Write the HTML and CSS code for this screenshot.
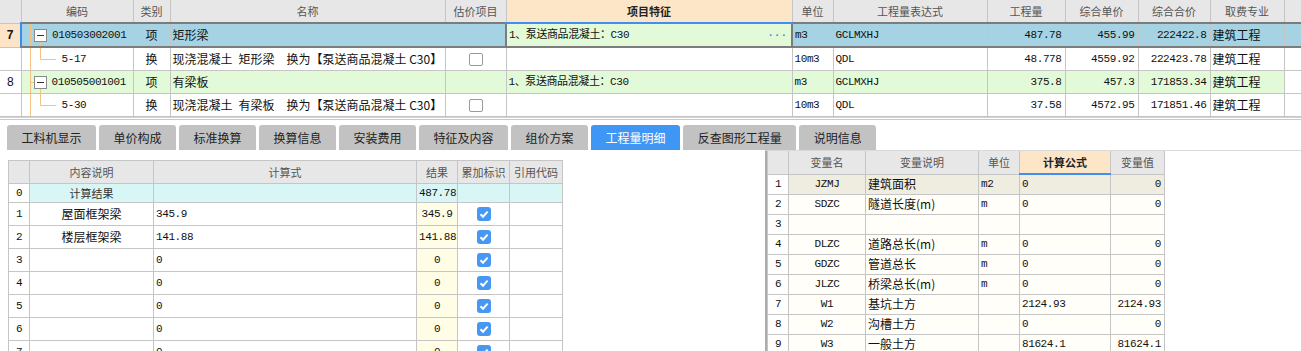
FILE: index.html
```html
<!DOCTYPE html>
<html lang="zh-CN">
<head>
  <meta charset="UTF-8" />
  <title>工程量明细</title>
  <link rel="stylesheet" href="styles.css">
</head>
<body>
  <table class="grid main">
    <colgroup>
      <col class="w21"><col class="w112"><col class="w37"><col class="w275"><col class="w61"><col class="w286">
      <col class="w41"><col class="w154"><col class="w78"><col class="w73"><col class="w72"><col class="w74"><col class="w17">
    </colgroup>
    <thead>
      <tr>
        <th></th><th>编码</th><th>类别</th><th>名称</th><th>估价项目</th><th class="sorted">项目特征</th>
        <th>单位</th><th>工程量表达式</th><th>工程量</th><th>综合单价</th><th>综合合价</th><th>取费专业</th><th></th>
      </tr>
    </thead>
    <tbody>
      <tr class="sel">
        <td class="rn cur-rn">7</td>
        <td class="code first">
          <div class="tree">
            <svg width="30" height="22" viewBox="0 0 30 22"><path d="M8.5 0V22M8.5 11.5H12M18.5 17.5V22" stroke="#f5c37f" fill="none"/><rect x="12.5" y="5.5" width="12" height="12" fill="#fff" stroke="#8a8a8a"/><path d="M15 11.5H22" stroke="#333"/></svg>
            <span>010503002001</span>
          </div>
        </td>
        <td class="c txt">项</td>
        <td class="txt">矩形梁</td>
        <td></td>
        <td class="cur"><div class="feat"><span>1、泵送商品混凝土：C30</span><span class="more">···</span></div></td>
        <td>m3</td>
        <td>GCLMXHJ</td>
        <td class="r">487.78</td>
        <td class="r">455.99</td>
        <td class="r">222422.8</td>
        <td class="txt">建筑工程</td>
        <td></td>
      </tr>
      <tr>
        <td class="rn"></td>
        <td class="code">
          <div class="tree">
            <svg width="40" height="22" viewBox="0 0 40 22"><path d="M8.5 0V22M18.5 0V11.5H34" stroke="#f5c37f" fill="none"/></svg>
            <span>5-17</span>
          </div>
        </td>
        <td class="c txt">换</td>
        <td class="txt name">现浇混凝土&ensp;矩形梁&ensp;&ensp;换为【泵送商品混凝土 C30】</td>
        <td class="c"><span class="box"></span></td>
        <td></td>
        <td>10m3</td>
        <td>QDL</td>
        <td class="r">48.778</td>
        <td class="r">4559.92</td>
        <td class="r">222423.78</td>
        <td class="txt">建筑工程</td>
        <td></td>
      </tr>
      <tr class="green">
        <td class="rn">8</td>
        <td class="code">
          <div class="tree">
            <svg width="30" height="22" viewBox="0 0 30 22"><path d="M8.5 0V22M8.5 11.5H12M18.5 17.5V22" stroke="#f5c37f" fill="none"/><rect x="12.5" y="5.5" width="12" height="12" fill="#fff" stroke="#8a8a8a"/><path d="M15 11.5H22" stroke="#333"/></svg>
            <span>010505001001</span>
          </div>
        </td>
        <td class="c txt">项</td>
        <td class="txt">有梁板</td>
        <td></td>
        <td>1、泵送商品混凝土：C30</td>
        <td>m3</td>
        <td>GCLMXHJ</td>
        <td class="r">375.8</td>
        <td class="r">457.3</td>
        <td class="r">171853.34</td>
        <td class="txt">建筑工程</td>
        <td class="blank"></td>
      </tr>
      <tr>
        <td class="rn"></td>
        <td class="code">
          <div class="tree">
            <svg width="40" height="22" viewBox="0 0 40 22"><path d="M8.5 0V22M18.5 0V11.5H34" stroke="#f5c37f" fill="none"/></svg>
            <span>5-30</span>
          </div>
        </td>
        <td class="c txt">换</td>
        <td class="txt name">现浇混凝土&ensp;有梁板&ensp;&ensp;换为【泵送商品混凝土 C30】</td>
        <td class="c"><span class="box"></span></td>
        <td></td>
        <td>10m3</td>
        <td>QDL</td>
        <td class="r">37.58</td>
        <td class="r">4572.95</td>
        <td class="r">171851.46</td>
        <td class="txt">建筑工程</td>
        <td></td>
      </tr>
    </tbody>
  </table>

  <div class="split"></div>

  <div class="tabs">
    <div class="tab">工料机显示</div>
    <div class="tab">单价构成</div>
    <div class="tab">标准换算</div>
    <div class="tab">换算信息</div>
    <div class="tab">安装费用</div>
    <div class="tab">特征及内容</div>
    <div class="tab">组价方案</div>
    <div class="tab active">工程量明细</div>
    <div class="tab">反查图形工程量</div>
    <div class="tab">说明信息</div>
  </div>

  <div class="detail">
    <div class="calc-pane">
      <table class="grid calc">
        <colgroup>
          <col class="w21"><col class="w124"><col class="w263"><col class="w41"><col class="w52"><col class="w53">
        </colgroup>
        <thead>
          <tr><th></th><th>内容说明</th><th>计算式</th><th>结果</th><th>累加标识</th><th>引用代码</th></tr>
        </thead>
        <tbody>
          <tr class="total">
            <td class="rn">0</td>
            <td class="c label">计算结果</td>
            <td></td>
            <td class="c">487.78</td>
            <td></td>
            <td></td>
          </tr>
          <tr>
            <td class="rn">1</td><td class="c txt">屋面框架梁</td><td>345.9</td><td class="c res">345.9</td>
            <td class="c"><svg class="chk" width="14" height="14" viewBox="0 0 14 14"><rect width="14" height="14" rx="3" fill="#4798f2"/><path d="M3.5 7.3L6 9.7L10.6 4.6" stroke="#fff" stroke-width="2" fill="none"/></svg></td><td></td>
          </tr>
          <tr>
            <td class="rn">2</td><td class="c txt">楼层框架梁</td><td>141.88</td><td class="c res">141.88</td>
            <td class="c"><svg class="chk" width="14" height="14" viewBox="0 0 14 14"><rect width="14" height="14" rx="3" fill="#4798f2"/><path d="M3.5 7.3L6 9.7L10.6 4.6" stroke="#fff" stroke-width="2" fill="none"/></svg></td><td></td>
          </tr>
          <tr>
            <td class="rn">3</td><td></td><td>0</td><td class="c res">0</td>
            <td class="c"><svg class="chk" width="14" height="14" viewBox="0 0 14 14"><rect width="14" height="14" rx="3" fill="#4798f2"/><path d="M3.5 7.3L6 9.7L10.6 4.6" stroke="#fff" stroke-width="2" fill="none"/></svg></td><td></td>
          </tr>
          <tr>
            <td class="rn">4</td><td></td><td>0</td><td class="c res">0</td>
            <td class="c"><svg class="chk" width="14" height="14" viewBox="0 0 14 14"><rect width="14" height="14" rx="3" fill="#4798f2"/><path d="M3.5 7.3L6 9.7L10.6 4.6" stroke="#fff" stroke-width="2" fill="none"/></svg></td><td></td>
          </tr>
          <tr>
            <td class="rn">5</td><td></td><td>0</td><td class="c res">0</td>
            <td class="c"><svg class="chk" width="14" height="14" viewBox="0 0 14 14"><rect width="14" height="14" rx="3" fill="#4798f2"/><path d="M3.5 7.3L6 9.7L10.6 4.6" stroke="#fff" stroke-width="2" fill="none"/></svg></td><td></td>
          </tr>
          <tr>
            <td class="rn">6</td><td></td><td>0</td><td class="c res">0</td>
            <td class="c"><svg class="chk" width="14" height="14" viewBox="0 0 14 14"><rect width="14" height="14" rx="3" fill="#4798f2"/><path d="M3.5 7.3L6 9.7L10.6 4.6" stroke="#fff" stroke-width="2" fill="none"/></svg></td><td></td>
          </tr>
          <tr>
            <td class="rn">7</td><td></td><td>0</td><td class="c res">0</td>
            <td class="c"><svg class="chk" width="14" height="14" viewBox="0 0 14 14"><rect width="14" height="14" rx="3" fill="#4798f2"/><path d="M3.5 7.3L6 9.7L10.6 4.6" stroke="#fff" stroke-width="2" fill="none"/></svg></td><td></td>
          </tr>
        </tbody>
      </table>
    </div>

    <div class="var-pane">
      <table class="grid vars">
        <colgroup>
          <col class="w21"><col class="w77"><col class="w113"><col class="w41"><col class="w91"><col class="w54">
        </colgroup>
        <thead>
          <tr><th></th><th>变量名</th><th>变量说明</th><th>单位</th><th class="sorted">计算公式</th><th>变量值</th></tr>
        </thead>
        <tbody>
          <tr class="beige"><td class="rn">1</td><td class="c">JZMJ</td><td class="txt">建筑面积</td><td>m2</td><td>0</td><td class="r">0</td></tr>
          <tr><td class="rn">2</td><td class="c">SDZC</td><td class="txt">隧道长度(m)</td><td>m</td><td>0</td><td class="r">0</td></tr>
          <tr><td class="rn">3</td><td></td><td></td><td></td><td></td><td></td></tr>
          <tr><td class="rn">4</td><td class="c">DLZC</td><td class="txt">道路总长(m)</td><td>m</td><td>0</td><td class="r">0</td></tr>
          <tr><td class="rn">5</td><td class="c">GDZC</td><td class="txt">管道总长</td><td>m</td><td>0</td><td class="r">0</td></tr>
          <tr><td class="rn">6</td><td class="c">JLZC</td><td class="txt">桥梁总长(m)</td><td>m</td><td>0</td><td class="r">0</td></tr>
          <tr><td class="rn">7</td><td class="c">W1</td><td class="txt">基坑土方</td><td></td><td>2124.93</td><td class="r">2124.93</td></tr>
          <tr><td class="rn">8</td><td class="c">W2</td><td class="txt">沟槽土方</td><td></td><td>0</td><td class="r">0</td></tr>
          <tr><td class="rn">9</td><td class="c">W3</td><td class="txt">一般土方</td><td></td><td>81624.1</td><td class="r">81624.1</td></tr>
        </tbody>
      </table>
    </div>
  </div>
</body>
</html>
```

FILE: styles.css
```css
* {
  box-sizing: border-box;
}
html,
body {
  margin: 0;
}
body {
  width: 1301px;
  height: 351px;
  overflow: hidden;
  background: #fff;
  color: #111;
  font-family: "Liberation Mono", "Noto Sans CJK SC", monospace;
  font-size: 11px;
  letter-spacing: -0.4px;
}

/* grids */
.grid {
  border-collapse: collapse;
  table-layout: fixed;
}
.grid th,
.grid td {
  border: 1px solid #c5c5c5;
  padding: 0 2px;
  white-space: nowrap;
  overflow: hidden;
  line-height: 14px;
}
.grid th {
  background: #e7e7e7;
  color: #555;
  font-family: "Noto Sans CJK SC", sans-serif;
  font-size: 11px;
  font-weight: normal;
  letter-spacing: 0;
}
.grid th.sorted {
  background: #fde5c7;
  color: #222;
  font-weight: bold;
  border-bottom: 2px solid #3f8ef0;
}
.grid .txt {
  font-family: "Noto Sans CJK SC", sans-serif;
  font-size: 12px;
  letter-spacing: 0;
  color: #111;
}
.grid .c {
  text-align: center;
}
.grid .r {
  text-align: right;
  padding-right: 3px;
}
.grid .rn {
  text-align: center;
  padding: 0;
}

/* column widths */
.w17 { width: 17px; }
.w21 { width: 21px; }
.w37 { width: 37px; }
.w41 { width: 41px; }
.w52 { width: 52px; }
.w53 { width: 53px; }
.w54 { width: 54px; }
.w61 { width: 61px; }
.w72 { width: 72px; }
.w73 { width: 73px; }
.w74 { width: 74px; }
.w77 { width: 77px; }
.w78 { width: 78px; }
.w91 { width: 91px; }
.w112 { width: 112px; }
.w113 { width: 113px; }
.w124 { width: 124px; }
.w154 { width: 154px; }
.w263 { width: 263px; }
.w275 { width: 275px; }
.w286 { width: 286px; }

/* top bill grid */
.main {
  width: 1301px;
}
.main th {
  height: 23px;
  border-top: none;
}
.main th:first-child {
  border-left: none;
}
.main td {
  height: 23px;
}
.main td:first-child {
  border-left: none;
}
.main td.rn {
  font-family: "Liberation Sans", sans-serif;
  font-size: 12px;
  letter-spacing: 0;
}
.main tr.sel td {
  background: #a6d3e3;
  border-top: 2px solid #7c7c7c;
  border-bottom: 2px solid #7c7c7c;
}
.main tr.sel td.cur-rn {
  background: #fde4c6;
  font-weight: bold;
  border-top: 1px solid #c5c5c5;
  border-bottom: 1px solid #c5c5c5;
}
.main tr.sel td.first {
  border-left: 2px solid #3c8cf0;
}
.main tr.sel td.cur {
  background: #e3fad9;
  border-left: 2px solid #7c7c7c;
  border-right: 2px solid #7c7c7c;
}
.main tr.green td {
  background: #e3fad9;
}
.main tr.green td.rn,
.main tr.green td.blank {
  background: #fff;
}
.main td.code {
  padding: 0;
}
.tree {
  display: flex;
  align-items: center;
}
.tree svg {
  display: block;
  flex: none;
}
.feat {
  display: flex;
  justify-content: space-between;
  align-items: center;
}
.more {
  color: #3d8ee0;
  font-weight: bold;
  letter-spacing: 0;
  padding-right: 2px;
}
.box {
  display: inline-block;
  width: 14px;
  height: 13px;
  border: 1px solid #999;
  border-radius: 2px;
  background: #fff;
  vertical-align: middle;
}

.split {
  height: 3px;
  border-top: 1px solid #d2d2d2;
  border-bottom: 1px solid #c8c8c8;
}

/* tabs */
.tabs {
  display: flex;
  gap: 3px;
  padding: 5px 0 0 7px;
}
.tab {
  height: 25px;
  line-height: 25px;
  padding: 0 14.5px;
  background: #c2c2c2;
  border-radius: 3px 3px 0 0;
  font-family: "Noto Sans CJK SC", sans-serif;
  font-size: 12px;
  letter-spacing: 0;
  color: #222;
}
.tab.active {
  background: #4096f5;
  color: #fff;
}

/* lower detail panes */
.detail {
  display: flex;
}
.calc-pane {
  width: 765px;
  flex: none;
  padding: 10px 0 0 8px;
}
.calc {
  width: 554px;
}
.calc th {
  height: 23px;
}
.calc td {
  height: 23px;
}
.calc tr.total td {
  height: 19px;
  background: #d9f6f6;
}
.calc tr.total td.rn {
  background: #fff;
}
.calc td.label {
  font-family: "Noto Sans CJK SC", sans-serif;
  font-size: 11px;
  color: #333;
  letter-spacing: 0;
}
.calc td.res {
  background: #fffde6;
}
.chk {
  display: block;
  margin: 0 auto;
}

.var-pane {
  flex: 1;
  border-left: 2px solid #adadad;
  border-top: 1px solid #dadada;
}
.vars {
  width: 397px;
}
.vars th {
  height: 23px;
  border-top: none;
}
.vars td {
  height: 20px;
  background: #fffef8;
}
.vars td.rn {
  background: #fff;
}
.vars tr.beige td {
  background: #efede0;
}
.vars tr.beige td.rn {
  background: #fff;
}
```
